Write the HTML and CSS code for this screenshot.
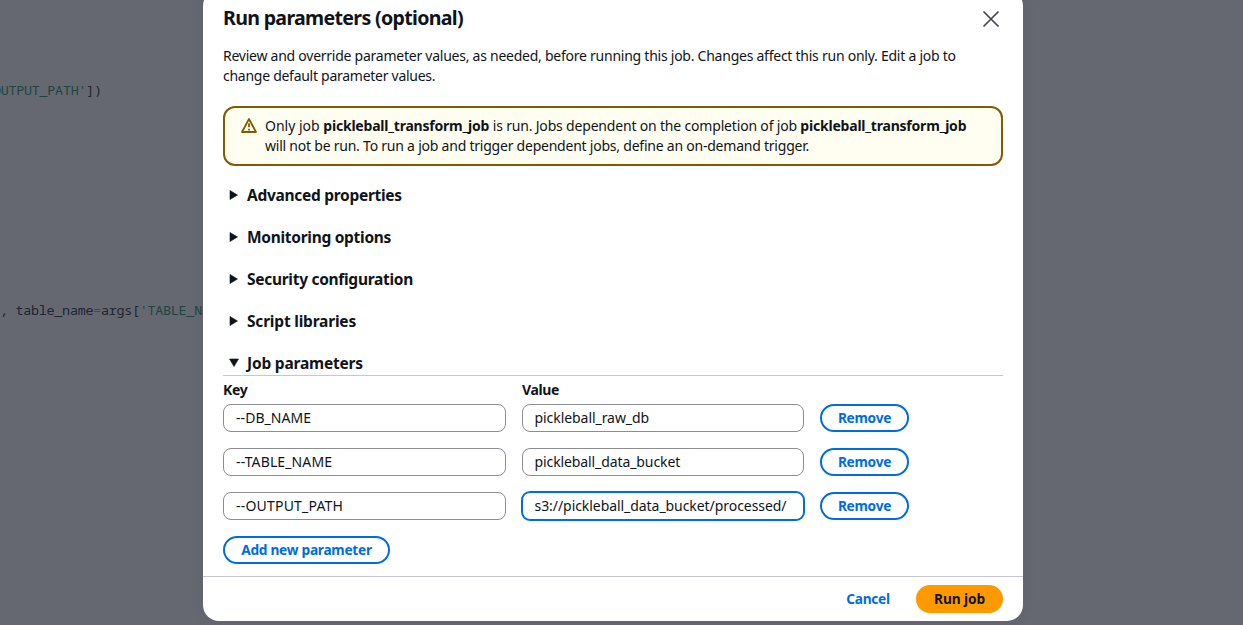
FILE: index.html
```
<!DOCTYPE html>
<html lang="en">
<head>
<meta charset="utf-8">
<title>Run parameters</title>
<link rel="stylesheet" href="styles.css">
</head>
<body>
<div class="editor">
  <pre class="code code-first"><span class="blue">O</span><span class="string">UTPUT_PATH'</span>])</pre>
  <pre class="code code-second">, table_name<span class="operator">=</span>args[<span class="string">'TABLE_NA</span></pre>
</div>
<div class="overlay">
  <main class="modal">
    <header class="header">
      <h1 class="title">Run parameters (optional)</h1>
      <svg class="close" viewBox="0 0 18 18"><path d="m1.5 1.5 15 15m0-15-15 15"/></svg>
    </header>
    <section class="content">
      <p class="intro"><span class="intro-one">Review and override parameter values, as needed, before running this job. Changes affect this run only. Edit a job to</span><br><span class="intro-two">change default parameter values.</span></p>
      <div class="alert">
        <svg class="warning" viewBox="0 0 16 16"><path d="M8 1 15 14H1L8 1Z M8 5.3v4 M8 10.7v1.7"/></svg>
        <p class="alert-text"><span class="alert-a">Only job </span><b class="alert-b">pickleball_transform_job</b><span class="alert-c"> is run. Jobs dependent on the completion of job </span><b class="alert-b">pickleball_transform_job</b><br><span class="alert-d">will not be run. To run a job and trigger dependent jobs, define an on-demand trigger.</span></p>
      </div>
      <div class="sections">
        <h2 class="section"><svg class="caret" viewBox="0 0 10 10"><path d="M1 .5 8.5 5 1 9.5Z"/></svg><span class="s-adv">Advanced properties</span></h2>
        <h2 class="section"><svg class="caret" viewBox="0 0 10 10"><path d="M1 .5 8.5 5 1 9.5Z"/></svg><span class="s-mon">Monitoring options</span></h2>
        <h2 class="section"><svg class="caret" viewBox="0 0 10 10"><path d="M1 .5 8.5 5 1 9.5Z"/></svg><span class="s-sec">Security configuration</span></h2>
        <h2 class="section"><svg class="caret" viewBox="0 0 10 10"><path d="M1 .5 8.5 5 1 9.5Z"/></svg><span class="s-lib">Script libraries</span></h2>
        <h2 class="section section-open"><svg class="caret" viewBox="0 0 10 10"><path d="M.5 1H9.5L5 8.5Z"/></svg><span class="s-job">Job parameters</span></h2>
      </div>
      <div class="labels"><span class="l-key">Key</span><span class="l-value">Value</span></div>
      <div class="rows">
        <div class="row"><div class="input"><span class="k1">--DB_NAME</span></div><div class="input value"><span class="v1">pickleball_raw_db</span></div><button class="button"><span class="remove">Remove</span></button></div>
        <div class="row"><div class="input"><span class="k2">--TABLE_NAME</span></div><div class="input value"><span class="v2">pickleball_data_bucket</span></div><button class="button"><span class="remove">Remove</span></button></div>
        <div class="row"><div class="input"><span class="k3">--OUTPUT_PATH</span></div><div class="input value focused"><span class="v3">s3://pickleball_data_bucket/processed/</span></div><button class="button"><span class="remove">Remove</span></button></div>
      </div>
      <button class="button add"><span class="add-text">Add new parameter</span></button>
    </section>
    <footer class="footer">
      <button class="button cancel"><span class="cancel-text">Cancel</span></button>
      <button class="button primary"><span class="run-text">Run job</span></button>
    </footer>
  </main>
</div>
</body>
</html>
```
FILE: styles.css
```
* { box-sizing: border-box; }
body { margin: 0; width: 1243px; height: 625px; overflow: hidden; position: relative; background: #656871; font-family: "Noto Sans", sans-serif; color: #0f141a; font-size: 14px; line-height: 20px; }
h1, h2, p, pre { margin: 0; }
.editor { width: 203px; height: 625px; overflow: hidden; display: flex; flex-direction: column; background: #656871; }
.code { font: 13.4px/20px "Noto Sans Mono", "DejaVu Sans Mono", monospace; letter-spacing: -.27px; color: #202433; }
.code-first { margin: 80px 0 0 -7px; }
.code-second { margin-top: 200px; }
.string { color: #1d4541; }
.blue { color: #17436b; }
.operator { color: #424854; }
.overlay { position: absolute; inset: 0; display: flex; justify-content: center; }
.modal { width: 820px; height: 631px; margin: -10px 0 0 -17px; background: #fff; border-radius: 16px; display: flex; flex-direction: column; box-shadow: 0 0 14px rgba(0, 7, 22, .06); }
.header { height: 50px; padding: 16px 23px 0 20px; display: flex; justify-content: space-between; align-items: flex-start; }
.title { font-size: 19.6px; line-height: 24px; font-weight: 700; letter-spacing: -.69px; }
.close { width: 18px; height: 18px; margin-top: 4px; fill: none; stroke: #424650; stroke-width: 1.7; }
.content { height: 536px; padding: 6px 20px 0; }
.alert { margin-top: 20px; height: 60px; border: 2px solid #855900; border-radius: 12px; background: #fffef0; padding: 8px 16px; display: flex; gap: 8px; }
.warning { width: 16px; height: 16px; margin-top: 2px; flex: none; fill: none; stroke: #855900; stroke-width: 1.8; stroke-linejoin: round; }
.intro, .alert-text { white-space: nowrap; }
.intro-one { letter-spacing: -.248px; }
.intro-two { letter-spacing: -.27px; }
.alert-b { letter-spacing: -.21px; }
.alert-c { letter-spacing: -.18px; }
.alert-d { letter-spacing: -.227px; }
.sections { display: grid; gap: 22px; padding-top: 19px; }
.section { height: 20px; padding-left: 6px; display: flex; align-items: center; gap: 8px; font-size: 15.5px; line-height: 20px; font-weight: 700; }
.section-open { height: 23px; padding-bottom: 2px; border-bottom: 1px solid #c6c6cd; }
.s-adv, .s-mon, .s-sec { letter-spacing: -.29px; }
.s-lib, .s-job { letter-spacing: -.2px; }
.caret { width: 10px; height: 10px; fill: #0f141a; stroke: #0f141a; stroke-width: .6; stroke-linejoin: round; }
.labels, .row { display: grid; grid-template-columns: 283px 282px 89px; column-gap: 16px; }
.labels { margin-top: 4px; height: 24px; font-weight: 700; letter-spacing: -.35px; }
.rows { display: grid; gap: 16px; }
.input { height: 28px; border: 1px solid #8c8c94; border-radius: 8px; padding: 3px 12px; white-space: nowrap; background: #fff; }
.value { padding-left: 11.5px; }
.k1 { letter-spacing: .06px; }
.k2 { letter-spacing: .12px; }
.k3 { letter-spacing: .2px; }
.v1, .v3 { letter-spacing: -.06px; }
.v2 { letter-spacing: -.1px; }
.focused { border-color: #006ce0; box-shadow: 0 0 0 1px #006ce0; }
.button { height: 28px; padding: 0; border: 2px solid #006ce0; border-radius: 20px; background: #fff; color: #006ce0; font: 700 13.7px/20px "Noto Sans", sans-serif; letter-spacing: -.26px; white-space: nowrap; }
.add { width: 167px; margin-top: 16px; }
.footer { height: 45px; padding: 8px 20px; border-top: 1px solid #c6c6cd; display: flex; justify-content: flex-end; gap: 7px; }
.cancel { border-color: transparent; background: transparent; width: 82px; }
.primary { width: 87px; border-color: #ff9900; background: #ff9900; color: #0f141a; letter-spacing: -.1px; }
```
